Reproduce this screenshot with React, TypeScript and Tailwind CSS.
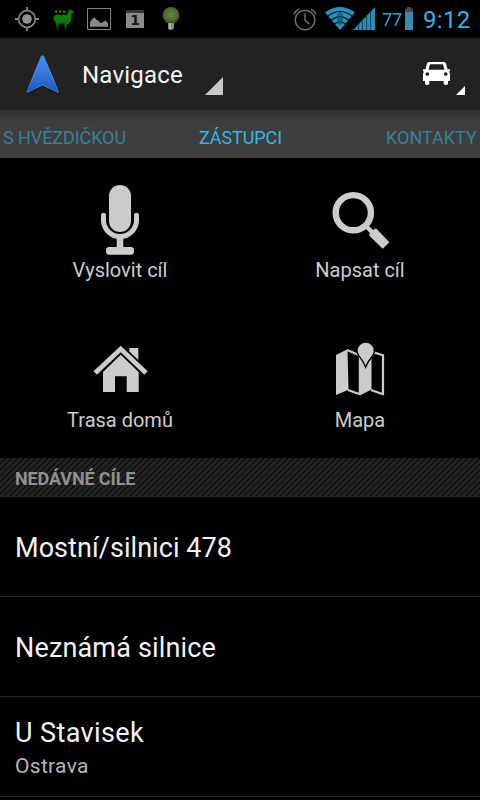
import type { ReactNode } from "react"

function StatusBar() {
  return (
    <div className="flex h-[38px] items-start bg-black">
      {/* GPS */}
      <svg className="ml-[15px] mt-[7px] h-6 w-6 shrink-0" viewBox="0 0 24 24" fill="none" stroke="#858585">
        <circle cx="12" cy="12" r="8.3" strokeWidth="1.7" />
        <circle cx="12" cy="12" r="4.8" fill="#929292" stroke="none" />
        <path d="M12 0v4M12 20v4M0 12h4M20 12h4" strokeWidth="1.8" />
      </svg>
      {/* Llama */}
      <svg className="ml-[14px] mt-[7px] h-6 w-[21px] shrink-0" viewBox="0 0 21 24">
        <defs>
          <linearGradient id="llama" x1="0" y1="0" x2="0" y2="1">
            <stop offset="0" stopColor="#08840d" />
            <stop offset="0.6" stopColor="#077a0b" />
            <stop offset="1" stopColor="#033c06" />
          </linearGradient>
        </defs>
        <path
          d="M15.8 2L17 3.5 17.5 2 18.5 3.5 21 4.5 20.7 6.2H18.8L18.3 12Q17.3 16.5 14 17.5L13.4 22.5H11.6L11.2 16.8 6.5 16.8 5.3 19 5.8 22.5H4L3 18.5 2.2 14.5 0.9 13.5 0.3 10.8 1.5 8.4 5 7.4 8 8.2 11 7.4 13.8 8.3 15.3 6Z"
          fill="url(#llama)"
        />
        <path d="M2 4.5h2.5M6 4.5h2.5M10 4.5h2.5" stroke="#08a010" strokeWidth="2" />
      </svg>
      {/* Screenshot saved */}
      <svg className="ml-[13px] mt-[8px] h-[22px] w-6 shrink-0" viewBox="0 0 24 22">
        <path d="M0.5 0.5H23.5V21.5H0.5Z" fill="none" stroke="#858585" strokeWidth="1" />
        <path d="M3 18.7V14L6.3 9.8H8L10 12.3 11.3 12.5 13 15 15.5 14.5 18.5 12.5 21 15.3V18.7Z" fill="#8a8a8a" />
      </svg>
      {/* Calendar */}
      <div className="ml-[15px] mt-[10px] flex h-[18px] w-[18px] shrink-0 flex-col bg-[#8b8b8b]">
        <div className="h-[3px] shrink-0 bg-[#373737]" />
        <div className="text-center font-['DejaVu_Sans',sans-serif] text-[14px] leading-[15px] font-bold text-[#171717]">1</div>
      </div>
      {/* Bulb */}
      <svg className="ml-[18px] mt-[7px] h-6 w-[18px] shrink-0" viewBox="0 0 18 24">
        <defs>
          <radialGradient id="bulb" cx="0.5" cy="0.45" r="0.55">
            <stop offset="0" stopColor="#64854a" />
            <stop offset="0.7" stopColor="#4b6d2e" />
            <stop offset="1" stopColor="#36501f" />
          </radialGradient>
        </defs>
        <path d="M9 0a8.5 8.5 0 0 1 8.5 8.5c0 3.5-2.4 4.8-4 7.5h-9c-1.6-2.7-4-4-4-7.5A8.5 8.5 0 0 1 9 0Z" fill="url(#bulb)" />
        <path d="M6 16h6v5.5q-3 3-6 0Z" fill="#858585" />
        <path d="M7 16h2v6H7Z" fill="#aaa" />
      </svg>
      {/* Alarm */}
      <svg className="ml-auto mt-[8px] h-[23px] w-6 shrink-0" viewBox="0 0 24 23" fill="none" stroke="#6e6e6e" strokeWidth="1.5">
        <circle cx="12" cy="12" r="9.8" />
        <path d="M12 5.5V12l4.5 4.2M1 6.3Q2.5 2.7 6 1.2M18 1.2Q21.5 2.7 23 6.3" />
      </svg>
      {/* Wi-Fi */}
      <svg className="ml-[8px] mt-[7px] h-[23px] w-[30px] shrink-0" viewBox="0 0 30 23">
        <path d="M0 5.5Q15-5.5 30 5.5L15 23Z" fill="#2a91ba" />
        <path d="M2.5 9.4Q15-0.5 27.5 9.4M6 13.3Q15 6 24 13.3M9.3 17.2Q15 12.5 20.7 17.2" fill="none" stroke="#05131a" strokeWidth="1.1" />
        <path d="M12 8L15 4.5 18 8V16L15 18.5 12 16Z" fill="#0f5670" fillOpacity="0.7" />
      </svg>
      {/* Signal strength */}
      <svg className="-ml-[2px] mt-[7px] h-[23px] w-[22px] shrink-0" viewBox="0 0 22 23">
        <path d="M0 23L22 0V23Z" fill="#2a8cb4" />
        <path d="M5.5 17v6M9.5 12v11M13.5 8v15M17.5 4v19" stroke="#0e485e" strokeWidth="1" />
      </svg>
      <span className="ml-[7px] mt-[8px] w-[21px] text-[18px] leading-[24px] text-[#2ea5d1]">77</span>
      <svg className="ml-[2px] mt-[7px] h-[23px] w-2 shrink-0" viewBox="0 0 8 23">
        <path d="M2 0h4v1.5h2V5H0V1.5h2Z" fill="#484848" />
        <path d="M0 5h8v18H0Z" fill="#348caf" />
      </svg>
      <span className="ml-[10px] mr-[9px] mt-[5px] w-[48px] whitespace-nowrap text-[24px] leading-[30px] tracking-[0.3px] text-[#33b5e5]">9:12</span>
    </div>
  )
}

function ActionBar() {
  return (
    <div className="flex h-[72px] items-start bg-[#222222]">
      <svg className="ml-[25px] mt-[16px] h-[42px] w-[36px] shrink-0" viewBox="0 0 36 42">
        <defs>
          <linearGradient id="arrow" x1="0" y1="0" x2="0" y2="1">
            <stop offset="0" stopColor="#4690f5" />
            <stop offset="0.5" stopColor="#3376dd" />
            <stop offset="1" stopColor="#1c55b5" />
          </linearGradient>
          <linearGradient id="edge" x1="0" y1="0" x2="0" y2="1">
            <stop offset="0" stopColor="#2873c6" />
            <stop offset="0.5" stopColor="#5a97e4" />
            <stop offset="1" stopColor="#2f74cf" />
          </linearGradient>
        </defs>
        <path d="M16 1.2Q17.5 0 19 1.2L33.8 38.3 32.8 40.3Q24 35.3 17.5 32.5Q11 35.3 3 40.3L1.8 38.3Z" fill="#141414" />
        <path d="M16.3 2Q17.5 1 18.7 2L33 37V38.6Q24 34 17.5 31Q11 34 2.4 38.6V37Z" fill="url(#arrow)" stroke="url(#edge)" strokeWidth="1" />
      </svg>
      <span className="ml-[21px] mt-[21px] w-[102px] whitespace-nowrap text-[24px] leading-8 tracking-[0.2px] text-[#f3f3f3]">Navigace</span>
      <svg className="ml-[21px] mt-[39px] h-[18px] w-[18px] shrink-0" viewBox="0 0 18 18">
        <path d="M18 0V18H0Z" fill="#c6c6c6" />
      </svg>
      {/* Car */}
      <svg className="ml-auto mt-[24px] h-[23px] w-[27px] shrink-0" viewBox="0 0 27 23" fill="#fff">
        <path
          fillRule="evenodd"
          d="M6 0H21Q22.5 0 23 1.5L24.5 7.3H27V9L26.2 9.8 27 12V19H25V22Q23 24 20.7 22V19H6.3V22Q4 24 2 22V19H0V12L0.8 9.8 0 9V7.3H2.5L4 1.5Q4.5 0 6 0ZM7 2.2L5.5 7.8H21.5L20 2.2ZM4.3 10.2a1.8 1.8 0 1 0 .01 0ZM22.7 10.2a1.8 1.8 0 1 0 .01 0Z"
        />
      </svg>
      <svg className="ml-[6px] mr-[15px] mt-[48px] h-[9px] w-[9px] shrink-0" viewBox="0 0 9 9">
        <path d="M9 0V9H0Z" fill="#fff" />
      </svg>
    </div>
  )
}

function Tabs() {
  return (
    <div className="flex h-12 items-center bg-linear-to-b from-[#303030] via-[#3a3a3a] via-15% to-[#3e3e3e] to-30% px-[3px] pt-2 text-[18px] leading-6 text-[#36809a]">
      <span className="w-[196px] whitespace-nowrap tracking-[-0.08px]">S HVĚZDIČKOU</span>
      <span className="whitespace-nowrap tracking-[-0.08px] text-[#33b5e5]">ZÁSTUPCI</span>
      <span className="ml-auto w-[91px] whitespace-nowrap">KONTAKTY</span>
    </div>
  )
}

const shortcuts: { label: string; icon: ReactNode }[] = [
  {
    label: "Vyslovit cíl",
    icon: (
      <>
        <rect x="25" y="1" width="22" height="47" rx="11" />
        <path d="M19.5 31.3V36a16.5 16.5 0 0 0 33 0V31.3" fill="none" stroke="#ccc" strokeWidth="5" strokeLinecap="round" />
        <path d="M32.7 52h6.6v12h-6.6Z" />
        <rect x="22" y="63" width="28" height="7.7" rx="3" />
      </>
    ),
  },
  {
    label: "Napsat cíl",
    icon: (
      <>
        <circle cx="29.3" cy="28.7" r="17.6" fill="none" stroke="#ccc" strokeWidth="6.4" />
        <path d="M42 42L49 49" stroke="#ccc" strokeWidth="4.5" />
        <path d="M45.3 50.3L46 49.3 50.7 44.8 52.5 44.8 65.3 58.3 58.7 64.7 45.6 52Z" />
      </>
    ),
  },
  {
    label: "Trasa domů",
    icon: (
      <>
        <path d="M36.7 11.7L63.7 37.3 60.3 40.7 36.7 18.2 12.9 40.7 9.5 37.3Z" />
        <path d="M45.3 14H54.3V26L45.3 17.4Z" />
        <path d="M36.7 20.8L54.7 38V58H42.7V42.3H31V58H19V38Z" />
      </>
    ),
  },
  {
    label: "Mapa",
    icon: (
      <>
        <path d="M12 21L23.5 15.2 24.5 55.7 12 61Z" />
        <path d="M23 16L36 21.6M24 56L36 60.3M47 56L59 60.3M47 20L50 18.5 59 21.2V61" fill="none" stroke="#ccc" strokeWidth="2.2" />
        <path d="M34.8 20L47.5 20V55.5L36.3 61.2 34.8 60.6Z" />
        <path
          d="M41.7 8.7a8 8 0 0 1 8 8c0 4.5-4.5 6.5-8 14.8-3.5-8.3-8-10.3-8-14.8a8 8 0 0 1 8-8Z"
          stroke="#000"
          strokeWidth="2.8"
          paintOrder="stroke"
        />
      </>
    ),
  },
]

const recent = [
  { name: "Mostní/silnici 478", spacing: "tracking-[0.06px]" },
  { name: "Neznámá silnice", spacing: "tracking-[0.16px]" },
  { name: "U Stavisek", spacing: "tracking-[0.4px]", city: "Ostrava" },
]

export default function App() {
  return (
    <div className="h-[800px] w-[480px] overflow-hidden bg-black font-['Roboto',sans-serif]">
      <StatusBar />
      <ActionBar />
      <Tabs />

      <div className="grid grid-cols-2">
        {shortcuts.map((item) => (
          <div key={item.label} className="flex h-[150px] flex-col items-center pt-[26px]">
            <svg className="h-[72px] w-[72px]" viewBox="0 0 72 72" fill="#ccc">
              {item.icon}
            </svg>
            <span className="text-[20px] leading-7 text-[#ccc]">{item.label}</span>
          </div>
        ))}
      </div>

      <div className="relative h-[39px] border-b border-[#2a2a2a] pt-[8px] pl-[15px]">
        {/* Hatched texture */}
        <svg className="absolute inset-0 h-full w-full" shapeRendering="crispEdges">
          <defs>
            <pattern id="hatch" width="6" height="6" patternUnits="userSpaceOnUse">
              <path d="M0 0h6v6H0Z" fill="#222" />
              <path d="M5 0h1v1h-1ZM4 1h1v1h-1ZM3 2h1v1h-1ZM2 3h1v1h-1ZM1 4h1v1h-1ZM0 5h1v1h-1Z" fill="#000" />
            </pattern>
          </defs>
          <rect width="480" height="38" fill="url(#hatch)" />
        </svg>
        <span className="relative text-[18px] leading-[26px] font-bold tracking-[-0.12px] text-[#909090]">NEDÁVNÉ CÍLE</span>
      </div>

      {recent.map((item) => (
        <div key={item.name} className="flex h-[100px] flex-col justify-center border-b border-[#2a2a2a] pt-[3px] pl-[15px]">
          <span className={`text-[27px] leading-9 text-[#f3f3f3] ${item.spacing}`}>{item.name}</span>
          {item.city && <span className="text-[21px] leading-[30px] tracking-[0.3px] text-[#b5b5b5]">{item.city}</span>}
        </div>
      ))}
    </div>
  )
}
